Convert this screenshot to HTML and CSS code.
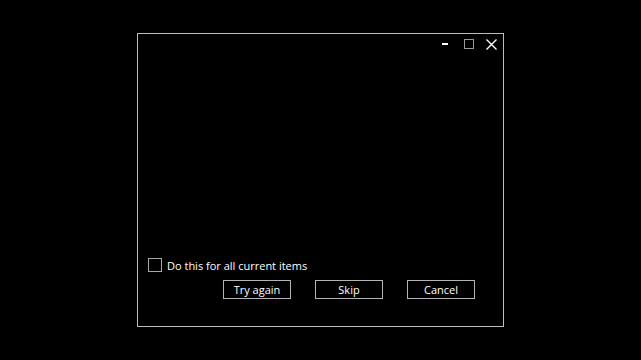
FILE: index.html
```html
<!DOCTYPE html>
<html lang="en">
<head>
  <meta charset="UTF-8">
  <title>Dialog</title>
  <link rel="stylesheet" href="styles.css">
</head>
<body>
  <div class="window">
    <div class="titlebar">
      <span class="ctl ctl-min"></span>
      <span class="ctl ctl-max"></span>
      <span class="ctl ctl-close">
        <svg width="11" height="11" viewBox="0 0 11 11"><path d="M0.5 0.5 L10.5 10.5 M10.5 0.5 L0.5 10.5" stroke="#fff" stroke-width="1.4" fill="none"/></svg>
      </span>
    </div>

    <div class="body"></div>

    <label class="check-row">
      <span class="check-box"></span>
      <span>Do this for all current items</span>
    </label>

    <div class="buttons">
      <button class="btn">Try again</button>
      <button class="btn">Skip</button>
      <button class="btn">Cancel</button>
    </div>
  </div>
</body>
</html>
```

FILE: styles.css
```css
* {
  box-sizing: border-box;
  margin: 0;
  padding: 0;
}

body {
  background: #000;
  height: 100vh;
  display: flex;
  align-items: center;
  justify-content: center;
  font-family: 'Open Sans', 'Noto Sans', sans-serif;
  color: #fff;
}

.window {
  width: 367px;
  height: 294px;
  border: 1px solid #bdbdbd;
  display: flex;
  flex-direction: column;
}

.titlebar {
  display: flex;
  justify-content: flex-end;
  align-items: center;
  gap: 12px;
  height: 20px;
  margin-top: 0;
  padding-right: 6px;
}

.ctl {
  width: 11px;
  height: 11px;
  display: flex;
  align-items: center;
  justify-content: center;
}

.ctl-min {
  width: 7px;
  margin-right: 4px;
}

.ctl-min::before {
  content: "";
  width: 6px;
  height: 2px;
  background: #fff;
}

.ctl-max {
  width: 10px;
  height: 10px;
  border: 1px solid #9a9a9a;
}

.body {
  flex: 1;
}

.check-row {
  display: flex;
  align-items: center;
  gap: 5px;
  padding-left: 10px;
  font-size: 11px;
  height: 14px;
}

.check-box {
  width: 14px;
  height: 14px;
  border: 1px solid #a8a8a8;
}

.buttons {
  display: flex;
  justify-content: flex-end;
  gap: 24px;
  margin-top: 8px;
  margin-bottom: 27px;
  padding-right: 28px;
}

.btn {
  width: 68px;
  height: 19px;
  background: #000;
  border: 1px solid #b4b4b4;
  color: #fff;
  font-family: inherit;
  font-size: 11px;
  line-height: 17px;
}
```
